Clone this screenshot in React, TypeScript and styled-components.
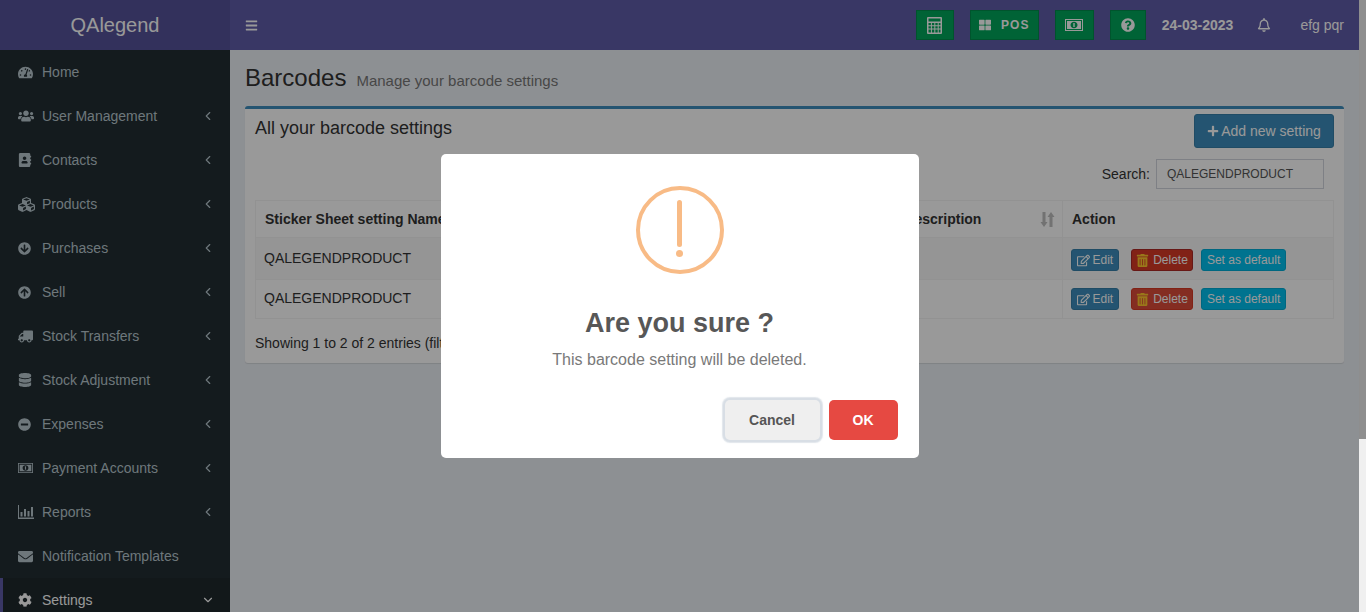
import React from 'react';
import styled, { createGlobalStyle } from 'styled-components';
import { ChevronDown, ChevronLeft } from 'lucide-react';
import {
  FaAddressBook,
  FaArrowCircleDown,
  FaArrowCircleUp,
  FaBars,
  FaCog,
  FaCubes,
  FaDatabase,
  FaEnvelope,
  FaMinusCircle,
  FaPlus,
  FaQuestionCircle,
  FaRegBell,
  FaRegEdit,
  FaTachometerAlt,
  FaThLarge,
  FaTrashAlt,
  FaTruck,
  FaUsers,
} from 'react-icons/fa';

const GlobalStyle = createGlobalStyle`
  html, body {
    margin: 0;
    height: 100%;
    overflow: hidden;
    background: #ecf0f5;
    font-family: 'Liberation Sans', Arial, sans-serif;
    font-size: 14px;
    color: #333;
  }
  * { box-sizing: border-box; }
`;

const Page = styled.div`
  display: flex;
  height: 612px;
  overflow: hidden;
`;

const Wrapper = styled.div`
  flex: 1;
  min-width: 0;
  display: flex;
  flex-direction: column;
`;

const ScrollStrip = styled.div`
  width: 7px;
  background: #f0f0f0;
`;

const StripShade = styled.div`
  height: 439px;
  background: #8e8e8e;
`;

const TopBar = styled.header`
  height: 50px;
  flex: none;
  display: flex;
  align-items: center;
  background: #605ca8;
  color: #fff;
`;

const Logo = styled.div`
  width: 230px;
  height: 50px;
  line-height: 50px;
  background: #555299;
  text-align: center;
  font-size: 20px;
`;

const Toggle = styled.span`
  display: flex;
  margin-left: 15px;
`;

const TopRight = styled.div`
  margin-left: auto;
  padding-right: 15px;
  display: flex;
  align-items: center;
`;

const GreenButton = styled.div<{ $w: number }>`
  width: ${(p) => p.$w}px;
  height: 30px;
  margin-right: 16px;
  display: flex;
  align-items: center;
  justify-content: center;
  gap: 10px;
  background: #00a65a;
  border: 1px solid #008d4c;
  font-size: 12px;
  font-weight: bold;
  letter-spacing: 1px;
`;

const DateText = styled.span`
  font-weight: bold;
`;

const Bell = styled.span`
  display: flex;
  margin-left: 24px;
  margin-right: 29px;
`;

const Body = styled.div`
  flex: 1;
  display: flex;
  min-height: 0;
`;

const Sidebar = styled.nav`
  width: 230px;
  flex: none;
  background: #222d32;
  overflow: hidden;
`;

const MenuItem = styled.div<{ $active?: boolean }>`
  height: 44px;
  flex: none;
  display: flex;
  align-items: center;
  padding-right: 15px;
  border-left: 3px solid ${(p) => (p.$active ? '#605ca8' : 'transparent')};
  padding-left: 15px;
  background: ${(p) => (p.$active ? '#1e282c' : 'transparent')};
  color: ${(p) => (p.$active ? '#fff' : '#b8c7ce')};
`;

const MenuIcon = styled.span`
  width: 24px;
  flex: none;
  display: flex;
  align-items: center;
  font-size: 14px;
`;

const MenuChevron = styled.span`
  margin-left: auto;
  display: flex;
`;

const FlippedIcon = styled.span`
  display: flex;
  transform: scaleX(-1);
`;

const Content = styled.main`
  flex: 1;
  min-width: 0;
`;

const ContentHeader = styled.div`
  padding: 15px 15px 0;
  display: flex;
  align-items: baseline;
  gap: 10px;
`;

const PageTitle = styled.h1`
  margin: 0;
  font-size: 24px;
  line-height: 26.4px;
  font-weight: 400;
`;

const PageSub = styled.small`
  font-size: 15px;
  color: #777;
`;

const Section = styled.section`
  padding: 15px;
`;

const Box = styled.div`
  background: #fff;
  border-top: 3px solid #3c8dbc;
  border-radius: 3px;
  box-shadow: 0 1px 1px rgba(0, 0, 0, 0.1);
  padding: 5px 10px 10px;
`;

const BoxHeader = styled.div`
  display: flex;
  justify-content: space-between;
  align-items: flex-start;
`;

const BoxTitle = styled.h3`
  margin: 5px 0 0;
  font-size: 18px;
  line-height: 18px;
  font-weight: 400;
`;

const AddButton = styled.div`
  width: 140px;
  height: 34px;
  display: flex;
  align-items: center;
  justify-content: center;
  gap: 2px;
  background: #3c8dbc;
  border: 1px solid #367fa9;
  border-radius: 3px;
  color: #fff;
`;

const SearchRow = styled.div`
  display: flex;
  justify-content: flex-end;
  align-items: center;
  gap: 6px;
  margin: 11px 0;
  padding-right: 10px;
`;

const SearchInput = styled.div`
  width: 168px;
  height: 30px;
  padding: 0 10px;
  display: flex;
  align-items: center;
  border: 1px solid #d2d6de;
  font-size: 12px;
  color: #555;
`;

const Table = styled.table`
  width: 100%;
  border-collapse: collapse;
  table-layout: fixed;
  border: 1px solid #f4f4f4;
`;

const HeadCell = styled.th<{ $w?: number }>`
  width: ${(p) => (p.$w ? `${p.$w}px` : 'auto')};
  height: 37px;
  padding: 0 9px;
  border: 1px solid #f4f4f4;
  text-align: left;
  font-size: 14px;
  white-space: nowrap;
  position: relative;
`;

const SortMark = styled.span`
  position: absolute;
  right: 7px;
  top: 11px;
  display: flex;
  color: #000;
  opacity: 0.25;
`;

const Row = styled.tr<{ $odd?: boolean; $h: number }>`
  height: ${(p) => p.$h}px;
  background: ${(p) => (p.$odd ? '#f9f9f9' : '#fff')};
`;

const Cell = styled.td<{ $top: number }>`
  padding: ${(p) => p.$top}px 8px 0;
  border: 1px solid #f4f4f4;
  vertical-align: top;
  line-height: 20px;
`;

const ActionRow = styled.div`
  display: flex;
`;

const SmallButton = styled.div<{ $bg: string; $edge: string; $gap?: number; $iconGap?: number }>`
  height: 22px;
  padding: 0 4.5px;
  margin-right: ${(p) => p.$gap ?? 0}px;
  display: flex;
  align-items: center;
  gap: ${(p) => p.$iconGap ?? 3}px;
  background: ${(p) => p.$bg};
  border: 1px solid ${(p) => p.$edge};
  border-radius: 3px;
  font-size: 12px;
  color: #fff;
`;

const TrashIcon = styled.span`
  display: flex;
  color: #ffc72c;
`;

const Footnote = styled.div`
  margin-top: 14px;
  line-height: 20px;
`;

const Overlay = styled.div`
  position: fixed;
  top: 0;
  left: 0;
  right: 7px;
  bottom: 0;
  display: flex;
  align-items: center;
  justify-content: center;
  background: rgba(0, 0, 0, 0.4);
`;

const Dialog = styled.div`
  width: 478px;
  height: 304px;
  padding-top: 32px;
  display: flex;
  flex-direction: column;
  align-items: center;
  background: #fff;
  border-radius: 5px;
`;

const WarningRing = styled.div`
  width: 88px;
  height: 88px;
  flex: none;
  display: flex;
  flex-direction: column;
  align-items: center;
  padding-top: 10px;
  border: 4px solid #f8bb86;
  border-radius: 50%;
`;

const WarningBar = styled.span`
  width: 5px;
  height: 47px;
  border-radius: 3px;
  background: #f8bb86;
`;

const WarningDot = styled.span`
  width: 7px;
  height: 7px;
  margin-top: 3px;
  border-radius: 50%;
  background: #f8bb86;
`;

const DialogTitle = styled.h2`
  margin: 33px 0 0;
  font-size: 27px;
  line-height: 32px;
  font-weight: bold;
  color: #575757;
`;

const DialogText = styled.p`
  margin: 11px 0 0;
  font-size: 16px;
  line-height: 20px;
  color: #797979;
`;

const DialogActions = styled.div`
  align-self: flex-end;
  margin-top: 30px;
  padding-right: 21px;
  display: flex;
  gap: 9px;
`;

const CancelButton = styled.div`
  width: 95px;
  height: 40px;
  display: flex;
  align-items: center;
  justify-content: center;
  background: #efefef;
  border-radius: 5px;
  box-shadow: 0 0 0 2px #d8dee5, 0 0 1px 3px rgba(120, 140, 165, 0.22);
  font-size: 14px;
  font-weight: bold;
  color: #555;
`;

const OkButton = styled.div`
  width: 69px;
  height: 40px;
  display: flex;
  align-items: center;
  justify-content: center;
  background: #e64942;
  border-radius: 5px;
  font-size: 14px;
  font-weight: bold;
  color: #fff;
`;

const CalculatorIcon = () => (
  <svg width="15" height="17" viewBox="0 0 15 17" fill="currentColor">
    <path fillRule="evenodd" d="M1 0h13a1 1 0 0 1 1 1v15a1 1 0 0 1-1 1H1a1 1 0 0 1-1-1V1a1 1 0 0 1 1-1zm.5 1.500v3h12v-3zm0 4.500v2.200h2.400V6zm3.400 0v2.200h2.400V6zm3.400 0v2.200h2.400V6zm3.400 0v2.200h1.800V6zM1.500 9.200v2.200h2.400V9.200zm3.400 0v2.200h2.400V9.200zm3.400 0v2.200h2.400V9.200zm3.400 0v2.200h1.800V9.200zM1.500 12.400v3h2.400v-3zm3.400 0v3h2.400v-3zm3.400 0v3h2.400v-3zm3.400 0v3h1.800v-3z" />
  </svg>
);

const MoneyIcon: React.FC<{ w: number }> = ({ w }) => (
  <svg width={w} height={(w * 12) / 18} viewBox="0 0 18 12" fill="currentColor">
    <path
      fillRule="evenodd"
      d="M0 0h18v12H0zM1 1v10h16V1zM2 2h14v8H2zM9 2.800C7 2.800 5.500 4.200 5.500 6S7 9.200 9 9.200 12.500 7.800 12.500 6 11 2.800 9 2.800z"
    />
    <path d="M8.300 4h1.400v4H8.300z" />
  </svg>
);

const BarChartIcon = () => (
  <svg width="16" height="14" viewBox="0 0 16 14" fill="currentColor">
    <path d="M0 0h1v12.500h15V14H0zM2.500 7h2v4.500h-2zM6 4h2v7.500H6zM9.500 6h2v5.500h-2zM13 2h2v9.500h-2z" />
  </svg>
);

const SortArrows = () => (
  <svg width="15" height="15" viewBox="0 0 15 15" fill="currentColor">
    <path d="M2.500 0h3v10h2L4 15 .5 10h2zM9.500 5h-2L11 0l3.500 5h-2v10h-3z" />
  </svg>
);

const menu: { label: string; icon: React.ReactNode; sub?: boolean }[] = [
  { label: 'Home', icon: <FaTachometerAlt size={15} /> },
  { label: 'User Management', icon: <FaUsers size={16} />, sub: true },
  { label: 'Contacts', icon: <FaAddressBook size={14} />, sub: true },
  { label: 'Products', icon: <FaCubes size={17} />, sub: true },
  { label: 'Purchases', icon: <FaArrowCircleDown size={13} />, sub: true },
  { label: 'Sell', icon: <FaArrowCircleUp size={13} />, sub: true },
  {
    label: 'Stock Transfers',
    icon: (
      <FlippedIcon>
        <FaTruck size={15} />
      </FlippedIcon>
    ),
    sub: true,
  },
  { label: 'Stock Adjustment', icon: <FaDatabase size={14} />, sub: true },
  { label: 'Expenses', icon: <FaMinusCircle size={13} />, sub: true },
  { label: 'Payment Accounts', icon: <MoneyIcon w={15} />, sub: true },
  { label: 'Reports', icon: <BarChartIcon />, sub: true },
  { label: 'Notification Templates', icon: <FaEnvelope size={15} /> },
];

const rows = [
  { odd: true, h: 42, textTop: 10, buttonTop: 11, del: '#d73925', delEdge: '#ac2925', info: '#00c0ef' },
  { odd: false, h: 39, textTop: 8, buttonTop: 8, del: '#dd4b39', delEdge: '#d73925', info: '#00c0ef' },
];

const App: React.FC = () => {
  return (
    <>
      <GlobalStyle />
      <Page>
        <Wrapper>
          <TopBar>
            <Logo>QAlegend</Logo>
            <Toggle>
              <FaBars size={13} />
            </Toggle>
            <TopRight>
              <GreenButton $w={38}>
                <CalculatorIcon />
              </GreenButton>
              <GreenButton $w={69}>
                <FaThLarge size={12} />
                POS
              </GreenButton>
              <GreenButton $w={39}>
                <MoneyIcon w={18} />
              </GreenButton>
              <GreenButton $w={36}>
                <FaQuestionCircle size={14} />
              </GreenButton>
              <DateText>24-03-2023</DateText>
              <Bell>
                <FaRegBell size={14} />
              </Bell>
              <span>efg pqr</span>
            </TopRight>
          </TopBar>
          <Body>
            <Sidebar>
              {menu.map((item) => (
                <MenuItem key={item.label}>
                  <MenuIcon>{item.icon}</MenuIcon>
                  {item.label}
                  {item.sub && (
                    <MenuChevron>
                      <ChevronLeft size={14} />
                    </MenuChevron>
                  )}
                </MenuItem>
              ))}
              <MenuItem $active>
                <MenuIcon>
                  <FaCog size={14} />
                </MenuIcon>
                Settings
                <MenuChevron>
                  <ChevronDown size={14} />
                </MenuChevron>
              </MenuItem>
            </Sidebar>
            <Content>
              <ContentHeader>
                <PageTitle>Barcodes</PageTitle>
                <PageSub>Manage your barcode settings</PageSub>
              </ContentHeader>
              <Section>
                <Box>
                  <BoxHeader>
                    <BoxTitle>All your barcode settings</BoxTitle>
                    <AddButton>
                      <FaPlus size={12} />
                      Add new setting
                    </AddButton>
                  </BoxHeader>
                  <SearchRow>
                    <span>Search:</span>
                    <SearchInput>QALEGENDPRODUCT</SearchInput>
                  </SearchRow>
                  <Table>
                    <thead>
                      <tr>
                        <HeadCell $w={497}>Sticker Sheet setting Name</HeadCell>
                        <HeadCell $w={310}>
                          Sticker Sheet setting Description
                          <SortMark>
                            <SortArrows />
                          </SortMark>
                        </HeadCell>
                        <HeadCell>Action</HeadCell>
                      </tr>
                    </thead>
                    <tbody>
                      {rows.map((row, i) => (
                        <Row key={i} $odd={row.odd} $h={row.h}>
                          <Cell $top={row.textTop}>QALEGENDPRODUCT</Cell>
                          <Cell $top={row.textTop}></Cell>
                          <Cell $top={row.buttonTop}>
                            <ActionRow>
                              <SmallButton $bg="#3c8dbc" $edge="#367fa9" $gap={12}>
                                <FaRegEdit size={13} />
                                Edit
                              </SmallButton>
                              <SmallButton $bg={row.del} $edge={row.delEdge} $gap={8} $iconGap={4}>
                                <TrashIcon>
                                  <FaTrashAlt size={13} />
                                </TrashIcon>
                                Delete
                              </SmallButton>
                              <SmallButton $bg={row.info} $edge="#00acd6">
                                Set as default
                              </SmallButton>
                            </ActionRow>
                          </Cell>
                        </Row>
                      ))}
                    </tbody>
                  </Table>
                  <Footnote>Showing 1 to 2 of 2 entries (filtered from 2 total entries)</Footnote>
                </Box>
              </Section>
            </Content>
          </Body>
        </Wrapper>
        <ScrollStrip>
          <StripShade />
        </ScrollStrip>
      </Page>
      <Overlay>
        <Dialog>
          <WarningRing>
            <WarningBar />
            <WarningDot />
          </WarningRing>
          <DialogTitle>Are you sure ?</DialogTitle>
          <DialogText>This barcode setting will be deleted.</DialogText>
          <DialogActions>
            <CancelButton>Cancel</CancelButton>
            <OkButton>OK</OkButton>
          </DialogActions>
        </Dialog>
      </Overlay>
    </>
  );
};

export default App;
